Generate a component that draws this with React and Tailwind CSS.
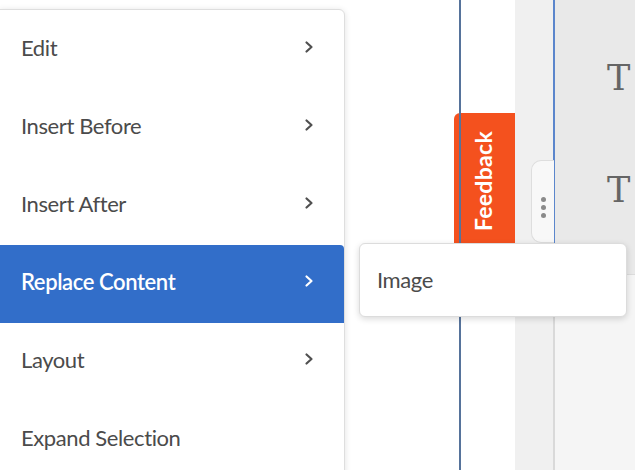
import React from "react";

const font = { fontFamily: "Lato, 'Noto Sans', sans-serif" };

function Chevron({ color }) {
  return (
    <svg width="12" height="14" viewBox="0 0 12 14" fill="none">
      <path d="M3.5 2.5 L8.5 7 L3.5 11.5" stroke={color} strokeWidth="2.2" strokeLinecap="round" strokeLinejoin="round" />
    </svg>
  );
}

const items = ["Edit", "Insert Before", "Insert After", "Replace Content", "Layout", "Expand Selection"];

export default function App() {
  return (
    <div className="relative w-[635px] h-[470px] overflow-hidden bg-white" style={font}>
      {/* background canvas */}
      <div className="flex h-full">
        <div className="w-[459px] bg-white" />
        <div className="relative z-10 w-[2px] bg-[#56739b]" />
        <div className="w-[54px] bg-white" />
        <div className="w-[38px] bg-[#f0f0f0]" />
        <div className="w-[2px] flex flex-col">
          <div className="h-[243px] bg-[#5b86cc]" />
          <div className="flex-1 bg-[#d9d9d9]" />
        </div>
        <div className="flex-1 flex flex-col">
          <div className="h-[275px] bg-[#e9e9e9] border-b border-[#dcdcdc] flex flex-col pl-[52px] pt-[57px] gap-[70px]">
            <span className="text-[35px] leading-[42px] text-[#656565]" style={{ fontFamily: "'DejaVu Serif', serif" }}>T</span>
            <span className="text-[35px] leading-[42px] text-[#656565]" style={{ fontFamily: "'DejaVu Serif', serif" }}>T</span>
          </div>
          <div className="flex-1 bg-[#f5f5f5]" />
        </div>
      </div>

      {/* feedback tab */}
      <div className="absolute left-[454px] top-[113px] w-[61px] h-[140px] bg-[#f4511e] rounded-tl-[6px] flex items-start justify-center pt-[18px] pr-[2px]">
        <span className="text-white text-[23px] font-bold leading-none tracking-[0.3px] [writing-mode:vertical-rl] rotate-180">Feedback</span>
      </div>

      {/* drag handle */}
      <div className="absolute left-[531px] top-[160px] w-[23px] h-[83px] bg-[#f8f8f8] border border-r-0 border-[#dedede] rounded-l-[10px] flex flex-col items-center justify-center gap-[3px] pt-[12px]">
        <span className="w-[5px] h-[5px] rounded-full bg-[#8a8a8a]" />
        <span className="w-[5px] h-[5px] rounded-full bg-[#8a8a8a]" />
        <span className="w-[5px] h-[5px] rounded-full bg-[#8a8a8a]" />
      </div>

      {/* main context menu */}
      <div className="absolute z-20 left-[-1px] top-[9px] w-[346px] bg-white border border-[#dedede] rounded-tr-[6px] shadow-[0_1px_6px_rgba(0,0,0,0.12)] pt-[1px]">
        {items.map((label, i) => {
          const active = label === "Replace Content";
          return (
            <div
              key={label}
              className={`h-[78px] flex items-center justify-between pl-[21px] pr-[29px] pb-[6px] ${active ? "bg-[#326ec9] rounded-tr-[4px]" : ""}`}
            >
              <span className={`text-[22px] tracking-[-0.4px] ${active ? "text-white font-semibold" : "text-[#4b4b4b]"}`}>{label}</span>
              {i < 5 && <Chevron color={active ? "#ffffff" : "#505050"} />}
            </div>
          );
        })}
      </div>

      {/* submenu */}
      <div className="absolute z-20 left-[359px] top-[243px] w-[268px] h-[74px] bg-white border border-[#dcdcdc] rounded-[6px] shadow-[0_2px_6px_rgba(0,0,0,0.15)] flex items-center pl-[17px] pb-[2px]">
        <span className="text-[22px] tracking-[-0.4px] text-[#4b4b4b]">Image</span>
      </div>
    </div>
  );
}
